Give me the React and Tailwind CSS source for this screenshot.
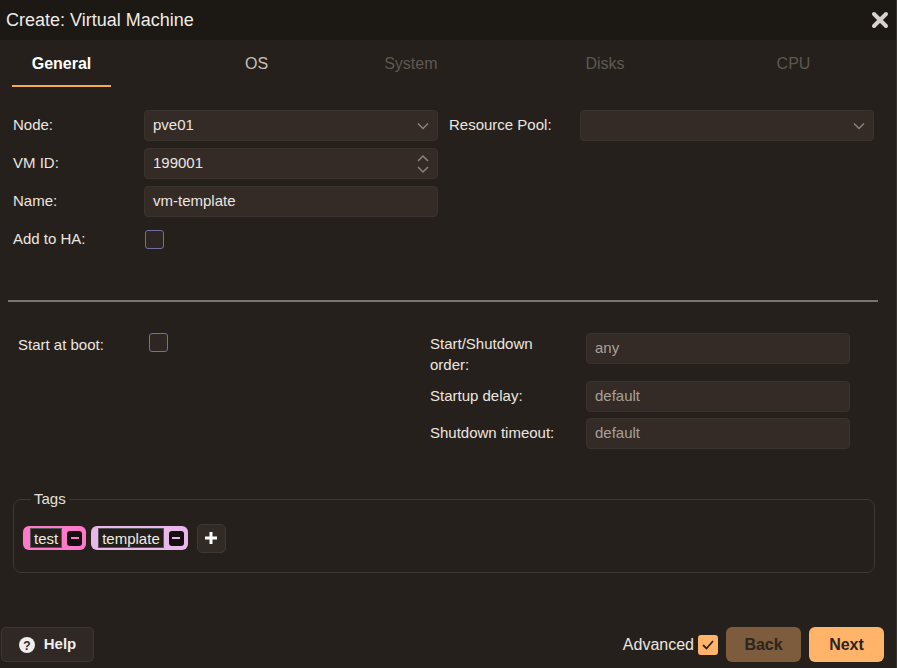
const F = { fontFamily: '"Liberation Sans", Arial, sans-serif' };

function Input({ value, placeholder, chevron, spinner, w = "w-[294px]" }) {
  return (
    <div className={`${w} h-[31px] rounded-[4px] border border-[#3a322c] bg-[#342b26] flex items-center px-2 justify-between`}>
      <span className={value ? "text-[#ece6e0]" : "text-[#a8a09a]"}>{value || placeholder}</span>
      {chevron && (
        <svg width="12" height="8" viewBox="0 0 12 8" fill="none" stroke="#8a827c" strokeWidth="1.5"><path d="M1 1.5l5 5 5-5" /></svg>
      )}
      {spinner && (
        <svg width="12" height="20" viewBox="0 0 12 20" fill="none" stroke="#8a827c" strokeWidth="1.5"><path d="M1 7l5-5 5 5M1 13l5 5 5-5" /></svg>
      )}
    </div>
  );
}

function Check() {
  return <div className="w-[19px] h-[19px] rounded-[3px] border border-[#6a72a0] bg-[#2d2622]" />;
}

function Tag({ label, bg, minus }) {
  return (
    <div className={`flex items-center h-[24px] rounded-[6px] ${bg} pl-[7px] pr-[4px] gap-[5px]`}>
      <span className="bg-[#231e1a] text-[#f0ebe6] px-[3px] h-[20px] leading-[20px] border border-[#555]">{label}</span>
      <span className="w-[15px] h-[15px] rounded-[3px] bg-[#14100e] flex items-center justify-center">
        <span className={`w-[8px] h-[2px] ${minus}`} />
      </span>
    </div>
  );
}

export default function App() {
  return (
    <div style={F} className="w-[897px] h-[668px] bg-[#25201b] text-[15px] text-[#ece6e0] flex flex-col border-r border-[#3a3430] overflow-hidden">
      <div className="h-[40px] bg-[#1c1814] flex items-center justify-between px-[6px] shrink-0">
        <span className="text-[18px] text-[#f0ebe6]">Create: Virtual Machine</span>
        <svg width="18" height="18" viewBox="0 0 18 18" className="mr-[1px]"><path d="M3 3l12 12M15 3L3 15" stroke="#d8d2cc" strokeWidth="4" strokeLinecap="round" /></svg>
      </div>
      <div className="flex h-[48px] items-center text-[16px] shrink-0">
        <div className="w-[99px] ml-[12px] h-full flex flex-col items-center justify-center relative">
          <span className="font-bold text-white">General</span>
          <div className="absolute bottom-[1px] left-0 right-0 h-[2px] bg-[#f6a85c]" />
        </div>
        <span className="ml-[134px] text-[#c6c0ba]">OS</span>
        <span className="ml-[116px] text-[#5e5852]">System</span>
        <span className="ml-[148px] text-[#5e5852]">Disks</span>
        <span className="ml-[152px] text-[#5e5852]">CPU</span>
      </div>
      <div className="flex pt-[22px] shrink-0">
        <div className="flex flex-col gap-[7px] pl-[13px]">
          {[
            ["Node:", <Input value="pve01" chevron />],
            ["VM ID:", <Input value="199001" spinner />],
            ["Name:", <Input value="vm-template" />],
            ["Add to HA:", <div className="h-[31px] flex items-center pl-[1px]"><Check /></div>],
          ].map(([l, c]) => (
            <div key={l} className="flex items-center h-[31px]">
              <span className="w-[131px]">{l}</span>
              {c}
            </div>
          ))}
        </div>
        <div className="flex items-center h-[31px] ml-[11px]">
          <span className="w-[131px]">Resource Pool:</span>
          <Input w="w-[294px]" chevron />
        </div>
      </div>
      <div className="mx-[8px] mt-[45px] h-[2px] bg-[#7a7470] shrink-0 w-[870px]" />
      <div className="flex pt-[31px] shrink-0">
        <div className="pl-[18px] flex items-start w-[430px]">
          <span className="w-[131px] pt-[1px]">Start at boot:</span>
          <Check />
        </div>
        <div className="flex flex-col gap-[6px]">
          <div className="flex items-start">
            <span className="w-[156px] leading-[21px]">Start/Shutdown<br />order:</span>
            <Input w="w-[264px]" placeholder="any" />
          </div>
          <div className="flex items-center">
            <span className="w-[156px]">Startup delay:</span>
            <Input w="w-[264px]" placeholder="default" />
          </div>
          <div className="flex items-center">
            <span className="w-[156px]">Shutdown timeout:</span>
            <Input w="w-[264px]" placeholder="default" />
          </div>
        </div>
      </div>
      <fieldset className="mx-[13px] mt-[39px] w-[862px] h-[85px] border border-[#3e3732] rounded-[8px] px-[9px] shrink-0">
        <legend className="px-[3px] ml-[8px] text-[#e6e0da]">Tags</legend>
        <div className="flex items-center gap-[5px] mt-[13px]">
          <Tag label="test" bg="bg-[#ff79cb]" minus="bg-[#ff79cb]" />
          <Tag label="template" bg="bg-[#eab7ea]" minus="bg-[#eab7ea]" />
          <div className="ml-[4px] w-[29px] h-[29px] rounded-[5px] bg-[#322a25] border border-[#3e3732] flex items-center justify-center">
            <svg width="14" height="14" viewBox="0 0 14 14"><path d="M7 1v12M1 7h12" stroke="#fff" strokeWidth="3" /></svg>
          </div>
        </div>
      </fieldset>
      <div className="flex-1" />
      <div className="flex items-center justify-between px-[1px] pb-[6px] shrink-0">
        <div className="w-[93px] h-[35px] rounded-[5px] bg-[#2f2824] border border-[#3e3732] flex items-center justify-center gap-[9px] font-bold text-[#eee]">
          <svg width="16" height="16" viewBox="0 0 16 16"><circle cx="8" cy="8" r="8" fill="#eee" /><text x="8" y="12.5" textAnchor="middle" fontSize="12" fontWeight="bold" fill="#2f2824" fontFamily="Liberation Sans">?</text></svg>
          Help
        </div>
        <div className="flex items-center mr-[11px]">
          <span className="text-[16px] mr-[4px]">Advanced</span>
          <div className="w-[20px] h-[20px] rounded-[3px] bg-[#ffb46a] flex items-center justify-center">
            <svg width="12" height="10" viewBox="0 0 12 10" fill="none" stroke="#2a221c" strokeWidth="1.8"><path d="M1 5l3.5 3.5L11 1" /></svg>
          </div>
          <div className="ml-[8px] w-[75px] h-[35px] rounded-[6px] bg-[#7c5c3c] flex items-center justify-center font-bold text-[#2c241e] text-[16px]">Back</div>
          <div className="ml-[8px] w-[75px] h-[35px] rounded-[6px] bg-[#ffb46a] flex items-center justify-center font-bold text-[#2c241e] text-[16px]">Next</div>
        </div>
      </div>
    </div>
  );
}
